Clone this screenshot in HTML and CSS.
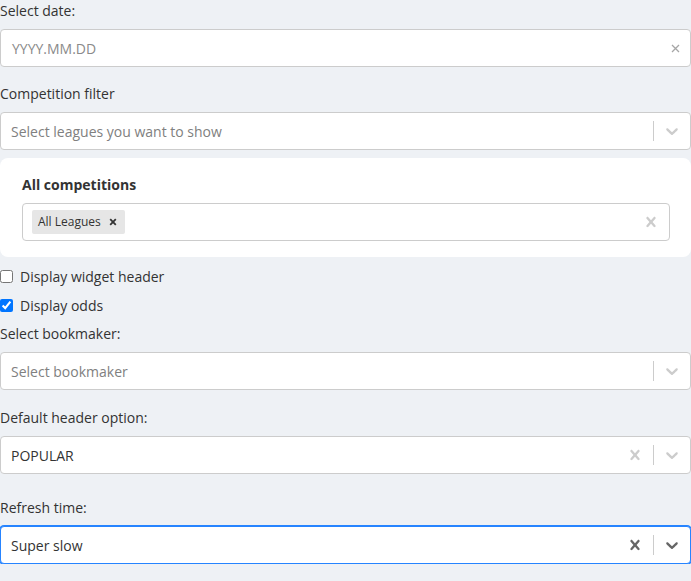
FILE: index.html
```html
<!DOCTYPE html>
<html>
<head>
<meta charset="utf-8">
<link rel="stylesheet" href="styles.css">
</head>
<body>
<div class="form">
  <div class="group g-date">
    <div class="label">Select date:</div>
    <div class="control">
      <div class="value"><span class="placeholder">YYYY.MM.DD</span></div>
      <div class="date-clear">
        <svg width="9" height="9" viewBox="0 0 9 9"><path d="M1 1L8 8M8 1L1 8" stroke="#a6a6a6" stroke-width="1.3" fill="none"/></svg>
      </div>
    </div>
  </div>

  <div class="group g-comp">
    <div class="label">Competition filter</div>
    <div class="control">
      <div class="value"><span class="placeholder">Select leagues you want to show</span></div>
      <div class="indicators">
        <span class="sep"></span>
        <div class="ind"><svg width="20" height="20" viewBox="0 0 20 20"><path d="M4.516 7.548c0.436-0.446 1.043-0.481 1.576 0l3.908 3.747 3.908-3.747c0.533-0.481 1.141-0.446 1.574 0 0.436 0.445 0.408 1.197 0 1.615-0.406 0.418-4.695 4.502-4.695 4.502-0.217 0.223-0.502 0.335-0.787 0.335s-0.57-0.112-0.789-0.335c0 0-4.287-4.084-4.695-4.502s-0.436-1.17 0-1.615z"/></svg></div>
      </div>
    </div>
  </div>

  <div class="card">
    <div class="card-title">All competitions</div>
    <div class="control">
      <div class="value multi">
        <div class="chip">
          <span class="chip-label">All Leagues</span>
          <span class="chip-remove"><svg width="8" height="8" viewBox="0 0 8 8"><path d="M1.2 1.2L6.8 6.8M6.8 1.2L1.2 6.8" stroke="#333" stroke-width="1.8" fill="none"/></svg></span>
        </div>
      </div>
      <div class="indicators">
        <div class="ind"><svg width="20" height="20" viewBox="0 0 20 20"><path d="M14.348 14.849c-0.469 0.469-1.229 0.469-1.697 0l-2.651-3.030-2.651 3.029c-0.469 0.469-1.229 0.469-1.697 0-0.469-0.469-0.469-1.229 0-1.697l2.758-3.15-2.759-3.152c-0.469-0.469-0.469-1.228 0-1.697s1.228-0.469 1.697 0l2.652 3.031 2.651-3.031c0.469-0.469 1.228-0.469 1.697 0s0.469 1.229 0 1.697l-2.758 3.152 2.758 3.15c0.469 0.469 0.469 1.229 0 1.698z"/></svg></div>
      </div>
    </div>
  </div>

  <label class="check r1"><input type="checkbox"><span>Display widget header</span></label>
  <label class="check r2"><input type="checkbox" checked><span>Display odds</span></label>

  <div class="group g-book">
    <div class="label">Select bookmaker:</div>
    <div class="control">
      <div class="value"><span class="placeholder">Select bookmaker</span></div>
      <div class="indicators">
        <span class="sep"></span>
        <div class="ind"><svg width="20" height="20" viewBox="0 0 20 20"><path d="M4.516 7.548c0.436-0.446 1.043-0.481 1.576 0l3.908 3.747 3.908-3.747c0.533-0.481 1.141-0.446 1.574 0 0.436 0.445 0.408 1.197 0 1.615-0.406 0.418-4.695 4.502-4.695 4.502-0.217 0.223-0.502 0.335-0.787 0.335s-0.57-0.112-0.789-0.335c0 0-4.287-4.084-4.695-4.502s-0.436-1.17 0-1.615z"/></svg></div>
      </div>
    </div>
  </div>

  <div class="group g-header">
    <div class="label">Default header option:</div>
    <div class="control">
      <div class="value"><span class="single">POPULAR</span></div>
      <div class="indicators">
        <div class="ind"><svg width="20" height="20" viewBox="0 0 20 20"><path d="M14.348 14.849c-0.469 0.469-1.229 0.469-1.697 0l-2.651-3.030-2.651 3.029c-0.469 0.469-1.229 0.469-1.697 0-0.469-0.469-0.469-1.229 0-1.697l2.758-3.15-2.759-3.152c-0.469-0.469-0.469-1.228 0-1.697s1.228-0.469 1.697 0l2.652 3.031 2.651-3.031c0.469-0.469 1.228-0.469 1.697 0s0.469 1.229 0 1.697l-2.758 3.152 2.758 3.15c0.469 0.469 0.469 1.229 0 1.698z"/></svg></div>
        <span class="sep"></span>
        <div class="ind"><svg width="20" height="20" viewBox="0 0 20 20"><path d="M4.516 7.548c0.436-0.446 1.043-0.481 1.576 0l3.908 3.747 3.908-3.747c0.533-0.481 1.141-0.446 1.574 0 0.436 0.445 0.408 1.197 0 1.615-0.406 0.418-4.695 4.502-4.695 4.502-0.217 0.223-0.502 0.335-0.787 0.335s-0.57-0.112-0.789-0.335c0 0-4.287-4.084-4.695-4.502s-0.436-1.17 0-1.615z"/></svg></div>
      </div>
    </div>
  </div>

  <div class="group g-refresh">
    <div class="label">Refresh time:</div>
    <div class="control focused">
      <div class="value"><span class="single">Super slow</span></div>
      <div class="indicators">
        <div class="ind"><svg width="20" height="20" viewBox="0 0 20 20"><path d="M14.348 14.849c-0.469 0.469-1.229 0.469-1.697 0l-2.651-3.030-2.651 3.029c-0.469 0.469-1.229 0.469-1.697 0-0.469-0.469-0.469-1.229 0-1.697l2.758-3.15-2.759-3.152c-0.469-0.469-0.469-1.228 0-1.697s1.228-0.469 1.697 0l2.652 3.031 2.651-3.031c0.469-0.469 1.228-0.469 1.697 0s0.469 1.229 0 1.697l-2.758 3.152 2.758 3.15c0.469 0.469 0.469 1.229 0 1.698z"/></svg></div>
        <span class="sep"></span>
        <div class="ind"><svg width="20" height="20" viewBox="0 0 20 20"><path d="M4.516 7.548c0.436-0.446 1.043-0.481 1.576 0l3.908 3.747 3.908-3.747c0.533-0.481 1.141-0.446 1.574 0 0.436 0.445 0.408 1.197 0 1.615-0.406 0.418-4.695 4.502-4.695 4.502-0.217 0.223-0.502 0.335-0.787 0.335s-0.57-0.112-0.789-0.335c0 0-4.287-4.084-4.695-4.502s-0.436-1.17 0-1.615z"/></svg></div>
      </div>
    </div>
  </div>
</div>
</body>
</html>
```

FILE: styles.css
```css
html, body {
  margin: 0;
  padding: 0;
  background: #eef1f5;
}
body {
  font-family: "Open Sans", "Noto Sans", sans-serif;
  font-size: 14px;
  line-height: 21px;
  color: #333;
}
.form {
  width: 691px;
  display: flex;
  flex-direction: column;
}
.label {
  height: 21px;
  margin-bottom: 8px;
  color: #333;
}
.g-comp { margin-top: 16px; }
.control {
  box-sizing: border-box;
  height: 38px;
  background: #fff;
  border: 1px solid #ccc;
  border-radius: 4px;
  display: flex;
  align-items: center;
}
.value {
  flex: 1;
  padding: 2px 8px;
  display: flex;
  align-items: center;
  overflow: hidden;
}
.placeholder {
  margin: 0 2px;
  color: #808080;
  white-space: nowrap;
}
.single {
  margin: 0 2px;
  color: #333;
}
.g-date .placeholder {
  margin-left: 3px;
  color: #8a8a8a;
}
.date-clear {
  width: 9px;
  height: 9px;
  display: flex;
  margin-right: 10px;
}
.indicators {
  display: flex;
  align-self: stretch;
  align-items: center;
}
.sep {
  width: 1px;
  align-self: stretch;
  margin: 8px 0;
  background: #ccc;
}
.ind {
  padding: 8px;
  display: flex;
  color: #ccc;
}
.ind svg { fill: currentColor; }
.focused {
  border-color: #2684ff;
  box-shadow: 0 0 0 1px #2684ff;
}
.focused .ind { color: #666; }

.card {
  margin-top: 8px;
  background: #fff;
  border-radius: 8px;
  padding: 17px 21px 16px 22px;
  height: 99px;
  box-sizing: border-box;
}
.card .control {
  width: 648px;
}
.card-title {
  font-weight: 700;
  height: 20px;
  line-height: 20px;
  margin-bottom: 8px;
}
.multi { padding: 2px 8px 2px 9px; }
.chip {
  display: flex;
  align-items: center;
  background: #e6e6e6;
  border-radius: 2px;
  height: 24px;
  margin: 2px 0;
}
.chip-label {
  font-size: 12px;
  line-height: 16px;
  padding: 0 3px 0 6px;
  color: #333;
}
.chip-remove {
  display: flex;
  padding: 0 8px 0 5px;
}

.check {
  display: flex;
  align-items: center;
  height: 21px;
  cursor: pointer;
}
.check input {
  margin: 0 7px 0 0;
  width: 13px;
  height: 13px;
}
.r1 { margin-top: 9px; }
.r2 { margin-top: 8px; }
.g-book { margin-top: 7px; }
.g-header { margin-top: 17px; }
.g-refresh { margin-top: 23px; }
```
